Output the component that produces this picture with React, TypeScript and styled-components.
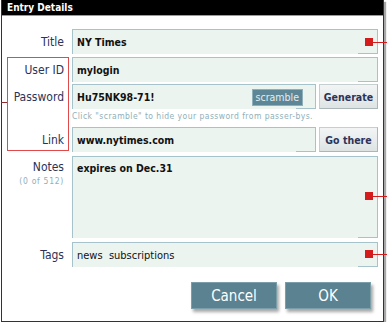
import styled, { createGlobalStyle } from "styled-components";

const GlobalStyle = createGlobalStyle`
  body {
    margin: 0;
    background: #ffffff;
    font-family: "DejaVu Sans Condensed", "Liberation Sans", sans-serif;
  }
`;

const Dialog = styled.div`
  position: relative;
  width: 381px;
  height: 321px;
  margin-left: 1px;
  border: 1px solid #333;
  border-top: none;
  box-shadow: 2px 2px 1px #a8a8a8;
  background: #fff;
`;

const TitleBar = styled.div`
  height: 15px;
  line-height: 15px;
  background: #000;
  color: #fff;
  font-size: 10px;
  font-weight: bold;
  padding-left: 5px;
  border-bottom: 1px solid #9a9a9a;
`;

const Form = styled.div`
  display: flex;
  flex-direction: column;
  padding: 13px 6px 0 0;
`;

const Row = styled.div<{ $mt?: number }>`
  display: grid;
  grid-template-columns: 62px 306px;
  column-gap: 8px;
  align-items: center;
  margin-top: ${(p) => p.$mt ?? 0}px;
`;

const Label = styled.div<{ $top?: boolean }>`
  text-align: right;
  font-size: 12px;
  color: #2b3358;
  align-self: ${(p) => (p.$top ? "start" : "center")};
  padding-top: ${(p) => (p.$top ? 4 : 0)}px;
`;

const SubLabel = styled.div`
  font-size: 8.5px;
  letter-spacing: 0.7px;
  color: #8fb0b8;
  margin-top: 2px;
`;

const Field = styled.div<{ $h?: number; $weight?: string }>`
  position: relative;
  box-sizing: border-box;
  height: ${(p) => p.$h ?? 25}px;
  background: #ecf4f0;
  border: 1px solid #a6c2ca;
  border-bottom: none;
  padding: 0 4px;
  display: flex;
  align-items: ${(p) => (p.$h ? "flex-start" : "center")};
  padding-top: ${(p) => (p.$h ? 5 : 0)}px;
  font-size: ${(p) => (p.$weight === "normal" ? 11 : 10.5)}px;
  font-weight: ${(p) => p.$weight ?? "bold"};
  color: #111;

  &::after {
    content: "";
    position: absolute;
    right: -1px;
    bottom: 0;
    width: 20px;
    height: 1px;
    background: #a6c2ca;
  }
`;

const FieldText = styled.span`
  flex: 1;
`;

const FieldGroup = styled.div`
  display: flex;
  gap: 3px;
  & > ${Field} {
    flex: 1;
  }
`;

const Scramble = styled.span`
  height: 17px;
  box-sizing: border-box;
  padding: 0 3px;
  margin-right: 8px;
  display: flex;
  align-items: center;
  background: #5d8796;
  border: 1px solid #8fb0bb;
  color: #e4edf0;
  font-size: 10.5px;
  font-weight: normal;
`;

const SideButton = styled.button`
  width: 59px;
  height: 25px;
  padding: 0;
  background: linear-gradient(#f3f5f5, #dde3e3);
  border: 1px solid #c5cfd0;
  border-right-color: #aab6b8;
  border-bottom-color: #aab6b8;
  font-family: inherit;
  font-size: 10.5px;
  font-weight: bold;
  color: #2b3358;
`;

const Hint = styled.div`
  grid-column: 2;
  font-size: 8.5px;
  letter-spacing: 0.45px;
  color: #8fb0b8;
`;

const Actions = styled.div`
  display: flex;
  justify-content: flex-end;
  gap: 8px;
  padding-right: 6px;
  margin-top: 15px;
`;

const ActionButton = styled.button`
  width: 86px;
  height: 27px;
  padding: 0;
  background: #5a8291;
  border: 1px solid #7b9ea9;
  color: #fff;
  font-family: inherit;
  font-size: 15px;
  box-shadow: 2px 3px 3px rgba(0, 0, 0, 0.35);
`;

const Marker = styled.span<{ $top?: number }>`
  position: absolute;
  right: 4px;
  top: ${(p) => (p.$top !== undefined ? `${p.$top}px` : "50%")};
  margin-top: ${(p) => (p.$top !== undefined ? 0 : -4)}px;
  width: 8px;
  height: 8px;
  background: #d41c1c;

  &::after {
    content: "";
    position: absolute;
    left: 8px;
    top: 4px;
    width: 16px;
    height: 1px;
    background: #d41c1c;
  }
`;

const LabelHighlight = styled.div`
  position: absolute;
  left: 5px;
  top: 57px;
  width: 60px;
  height: 92px;
  border: 1px solid #e04a4a;

  &::before {
    content: "";
    position: absolute;
    left: -7px;
    top: 44px;
    width: 6px;
    height: 1px;
    background: #8a2a2a;
  }
`;

export default function App() {
  return (
    <>
      <GlobalStyle />
      <Dialog>
        <TitleBar>Entry Details</TitleBar>
        <Form>
          <Row>
            <Label>Title</Label>
            <Field>
              <FieldText>NY Times</FieldText>
              <Marker />
            </Field>
          </Row>
          <Row $mt={3}>
            <Label>User ID</Label>
            <Field>
              <FieldText>mylogin</FieldText>
            </Field>
          </Row>
          <Row $mt={2}>
            <Label>Password</Label>
            <FieldGroup>
              <Field>
                <FieldText>Hu75NK98-71!</FieldText>
                <Scramble>scramble</Scramble>
              </Field>
              <SideButton>Generate</SideButton>
            </FieldGroup>
          </Row>
          <Row $mt={2}>
            <Hint>Click "scramble" to hide your password from passer-bys.</Hint>
          </Row>
          <Row $mt={6}>
            <Label>Link</Label>
            <FieldGroup>
              <Field>
                <FieldText>www.nytimes.com</FieldText>
              </Field>
              <SideButton>Go there</SideButton>
            </FieldGroup>
          </Row>
          <Row $mt={4}>
            <Label $top>
              Notes
              <SubLabel>(0 of 512)</SubLabel>
            </Label>
            <Field $h={82}>
              <FieldText>expires on Dec.31</FieldText>
              <Marker $top={35} />
            </Field>
          </Row>
          <Row $mt={4}>
            <Label>Tags</Label>
            <Field $weight="normal">
              <FieldText>news&nbsp; subscriptions</FieldText>
              <Marker $top={7} />
            </Field>
          </Row>
          <Actions>
            <ActionButton>Cancel</ActionButton>
            <ActionButton>OK</ActionButton>
          </Actions>
        </Form>
        <LabelHighlight />
      </Dialog>
    </>
  );
}
